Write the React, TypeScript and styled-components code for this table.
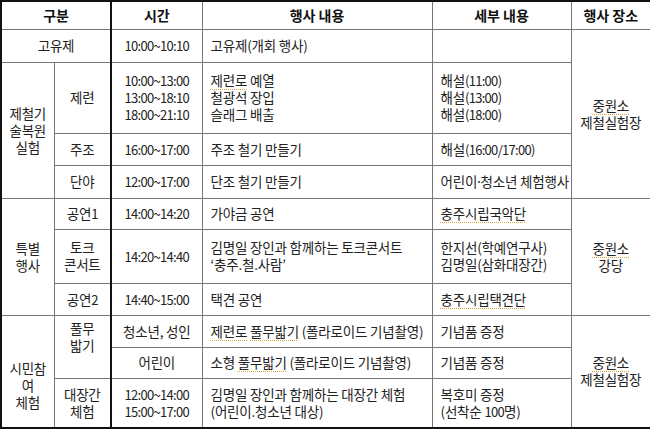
import React from "react";
import styled, { createGlobalStyle } from "styled-components";

const GlobalStyle = createGlobalStyle`
  html, body {
    margin: 0;
    padding: 0;
    background: #fff;
  }
  body {
    font-family: "Noto Sans CJK KR", "Noto Sans", sans-serif;
  }
`;

const Table = styled.table`
  width: 650px;
  border-collapse: collapse;
  table-layout: fixed;
  border: 2px solid #111;
  font-size: 13.5px;
  letter-spacing: -0.2px;
  line-height: 17px;
  color: #222;
`;

const Row = styled.tr<{ $h: number }>`
  height: ${(p) => p.$h}px;
`;

const Head = styled.th<{ $thick?: boolean }>`
  padding: 0;
  border: 1px solid #777;
  border-right: ${(p) => (p.$thick ? "2px solid #111" : "1px solid #777")};
  font-size: 14px;
  font-weight: bold;
  letter-spacing: 0;
  color: #111;
  text-align: center;
  vertical-align: middle;
`;

const Cell = styled.td<{
  $left?: boolean;
  $thick?: boolean;
  $padTop?: number;
  $padBottom?: number;
}>`
  border: 1px solid #777;
  border-right: ${(p) => (p.$thick ? "2px solid #111" : "1px solid #777")};
  padding: ${(p) => p.$padTop ?? 0}px 0 ${(p) => p.$padBottom ?? 0}px
    ${(p) => (p.$left ? 8 : 0)}px;
  text-align: ${(p) => (p.$left ? "left" : "center")};
  vertical-align: middle;
  white-space: nowrap;
`;

// digits in the reference font are narrower than in Noto
const Num = styled.span`
  font-size: 13px;
  letter-spacing: -0.7px;
`;

const Dot = styled.span`
  margin: 0 -0.15em;
`;

const Squiggle = styled.span`
  text-decoration: underline dotted #e2a23c;
  text-decoration-thickness: 1px;
  text-underline-offset: 3px;
`;

const Lines = ({ items }: { items: React.ReactNode[] }) => (
  <>
    {items.map((t, i) => (
      <div key={i}>{t}</div>
    ))}
  </>
);

export default function App() {
  return (
    <>
      <GlobalStyle />
      <Table>
        <colgroup>
          <col style={{ width: 53 }} />
          <col style={{ width: 57 }} />
          <col style={{ width: 91 }} />
          <col style={{ width: 230 }} />
          <col style={{ width: 139 }} />
          <col style={{ width: 80 }} />
        </colgroup>
        <thead>
          <Row $h={28}>
            <Head colSpan={2} $thick>
              구분
            </Head>
            <Head>시간</Head>
            <Head>행사 내용</Head>
            <Head>세부 내용</Head>
            <Head>행사 장소</Head>
          </Row>
        </thead>
        <tbody>
          <Row $h={33}>
            <Cell colSpan={2} $thick>
              고유제
            </Cell>
            <Cell>
              <Num>10:00~10:10</Num>
            </Cell>
            <Cell $left>고유제(개회 행사)</Cell>
            <Cell $left></Cell>
            <Cell rowSpan={4}>
              <Lines items={[<Squiggle>중원소</Squiggle>, "제철실험장"]} />
            </Cell>
          </Row>
          <Row $h={71}>
            <Cell rowSpan={3}>
              <Lines items={["제철기", "술복원", "실험"]} />
            </Cell>
            <Cell $thick>제련</Cell>
            <Cell>
              <Lines
                items={[
                  <Num>10:00~13:00</Num>,
                  <Num>13:00~18:10</Num>,
                  <Num>18:00~21:10</Num>,
                ]}
              />
            </Cell>
            <Cell $left>
              <Lines
                items={[
                  <>
                    <Squiggle>제련로</Squiggle> 예열
                  </>,
                  "철광석 장입",
                  "슬래그 배출",
                ]}
              />
            </Cell>
            <Cell $left>
              <Lines
                items={[
                  <>
                    해설<Num>(11:00)</Num>
                  </>,
                  <>
                    해설<Num>(13:00)</Num>
                  </>,
                  <>
                    해설<Num>(18:00)</Num>
                  </>,
                ]}
              />
            </Cell>
          </Row>
          <Row $h={32}>
            <Cell $thick>주조</Cell>
            <Cell>
              <Num>16:00~17:00</Num>
            </Cell>
            <Cell $left>주조 철기 만들기</Cell>
            <Cell $left>
              해설<Num>(16:00/17:00)</Num>
            </Cell>
          </Row>
          <Row $h={33}>
            <Cell $thick>단야</Cell>
            <Cell>
              <Num>12:00~17:00</Num>
            </Cell>
            <Cell $left>단조 철기 만들기</Cell>
            <Cell $left>
              어린이<Dot>·</Dot>청소년 체험행사
            </Cell>
          </Row>
          <Row $h={31}>
            <Cell rowSpan={3}>
              <Lines items={["특별", "행사"]} />
            </Cell>
            <Cell $thick>
              공연<Num>1</Num>
            </Cell>
            <Cell>
              <Num>14:00~14:20</Num>
            </Cell>
            <Cell $left>가야금 공연</Cell>
            <Cell $left>
              <Squiggle>충주시립국악단</Squiggle>
            </Cell>
            <Cell rowSpan={3}>
              <Lines items={[<Squiggle>중원소</Squiggle>, "강당"]} />
            </Cell>
          </Row>
          <Row $h={54}>
            <Cell $thick>
              <Lines items={["토크", "콘서트"]} />
            </Cell>
            <Cell>
              <Num>14:20~14:40</Num>
            </Cell>
            <Cell $left>
              <Lines
                items={["김명일 장인과 함께하는 토크콘서트", "‘충주.철.사람’"]}
              />
            </Cell>
            <Cell $left>
              <Lines items={["한지선(학예연구사)", "김명일(삼화대장간)"]} />
            </Cell>
          </Row>
          <Row $h={32}>
            <Cell $thick>
              공연<Num>2</Num>
            </Cell>
            <Cell>
              <Num>14:40~15:00</Num>
            </Cell>
            <Cell $left>택견 공연</Cell>
            <Cell $left>
              <Squiggle>충주시립택견단</Squiggle>
            </Cell>
          </Row>
          <Row $h={32}>
            <Cell rowSpan={3} $padTop={28}>
              <Lines items={["시민참", "여", "체험"]} />
            </Cell>
            <Cell rowSpan={2} $thick $padBottom={20}>
              <Lines items={["풀무", "밟기"]} />
            </Cell>
            <Cell>청소년, 성인</Cell>
            <Cell $left>
              <Squiggle>제련로</Squiggle> <Squiggle>풀무밟기</Squiggle> (폴라로이드
              기념촬영)
            </Cell>
            <Cell $left>기념품 증정</Cell>
            <Cell rowSpan={3}>
              <Lines items={[<Squiggle>중원소</Squiggle>, "제철실험장"]} />
            </Cell>
          </Row>
          <Row $h={31}>
            <Cell>어린이</Cell>
            <Cell $left>
              소형 <Squiggle>풀무밟기</Squiggle> (폴라로이드 기념촬영)
            </Cell>
            <Cell $left>기념품 증정</Cell>
          </Row>
          <Row $h={50}>
            <Cell $thick>
              <Lines items={["대장간", "체험"]} />
            </Cell>
            <Cell>
              <Lines items={[<Num>12:00~14:00</Num>, <Num>15:00~17:00</Num>]} />
            </Cell>
            <Cell $left>
              <Lines
                items={["김명일 장인과 함께하는 대장간 체험", "(어린이.청소년 대상)"]}
              />
            </Cell>
            <Cell $left>
              <Lines
                items={[
                  "복호미 증정",
                  <>
                    (선착순 <Num>100</Num>명)
                  </>,
                ]}
              />
            </Cell>
          </Row>
        </tbody>
      </Table>
    </>
  );
}
